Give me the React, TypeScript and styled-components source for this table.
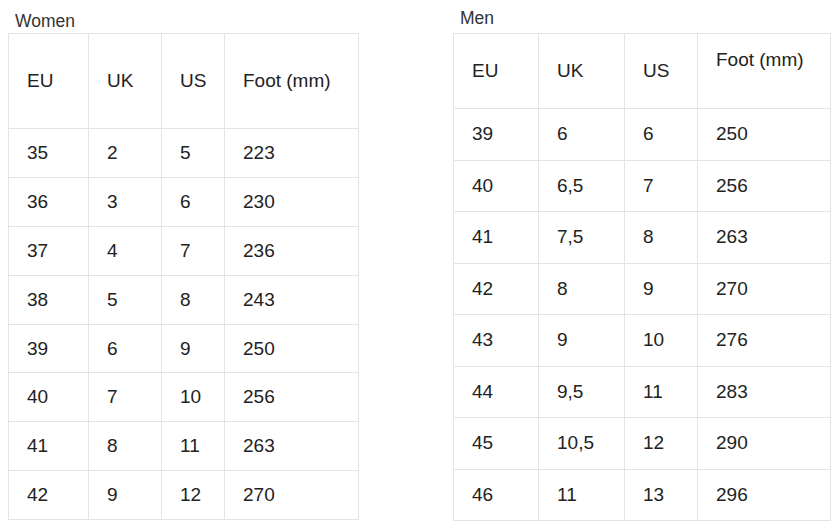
import styled, { createGlobalStyle } from 'styled-components';

const GlobalStyle = createGlobalStyle`
  body {
    margin: 0;
    background: #fff;
    font-family: 'Liberation Sans', Arial, sans-serif;
    color: #222;
  }
`;

const Page = styled.div`
  display: flex;
  align-items: flex-start;
  gap: 94px;
  padding-left: 8px;
  width: 839px;
  height: 529px;
  box-sizing: border-box;
`;

const Panel = styled.section`
  display: flex;
  flex-direction: column;
`;

const Title = styled.div<{ $top: number }>`
  font-size: 17.5px;
  line-height: 20px;
  color: #333;
  padding-left: 7px;
  padding-top: ${(p) => p.$top}px;
  height: 33px;
  box-sizing: border-box;
`;

const Table = styled.table`
  border-collapse: collapse;
  table-layout: fixed;
  font-size: 19px;
  color: #222;
`;

const HeadRow = styled.tr<{ $h: number }>`
  height: ${(p) => p.$h}px;
`;

const Row = styled.tr<{ $h: number }>`
  height: ${(p) => p.$h}px;
`;

const Cell = styled.td<{ $top?: boolean }>`
  border: 1px solid #e4e4e4;
  padding: ${(p) => (p.$top ? '15px 0 0 18px' : '0 0 0 18px')};
  vertical-align: ${(p) => (p.$top ? 'top' : 'middle')};
  text-align: left;
  font-weight: normal;
  white-space: nowrap;
`;

type SizeTable = {
  title: string;
  titleTop: number;
  cols: number[];
  headH: number;
  rowH: number;
  topFoot?: boolean;
  rows: string[][];
};

const women: SizeTable = {
  title: 'Women',
  titleTop: 11,
  cols: [80, 73, 63, 134],
  headH: 95,
  rowH: 48.9,
  rows: [
    ['35', '2', '5', '223'],
    ['36', '3', '6', '230'],
    ['37', '4', '7', '236'],
    ['38', '5', '8', '243'],
    ['39', '6', '9', '250'],
    ['40', '7', '10', '256'],
    ['41', '8', '11', '263'],
    ['42', '9', '12', '270'],
  ],
};

const men: SizeTable = {
  title: 'Men',
  titleTop: 8,
  cols: [85, 86, 73, 133],
  headH: 75,
  rowH: 51.5,
  topFoot: true,
  rows: [
    ['39', '6', '6', '250'],
    ['40', '6,5', '7', '256'],
    ['41', '7,5', '8', '263'],
    ['42', '8', '9', '270'],
    ['43', '9', '10', '276'],
    ['44', '9,5', '11', '283'],
    ['45', '10,5', '12', '290'],
    ['46', '11', '13', '296'],
  ],
};

const headers = ['EU', 'UK', 'US', 'Foot (mm)'];

function SizeChart({ data }: { data: SizeTable }) {
  const total = data.cols.reduce((a, b) => a + b, 0);
  return (
    <Panel>
      <Title $top={data.titleTop}>{data.title}</Title>
      <Table style={{ width: total }}>
        <colgroup>
          {data.cols.map((w, i) => (
            <col key={i} style={{ width: w }} />
          ))}
        </colgroup>
        <tbody>
          <HeadRow $h={data.headH}>
            {headers.map((h, i) => (
              <Cell as="th" key={h} $top={data.topFoot && i === 3}>
                {h}
              </Cell>
            ))}
          </HeadRow>
          {data.rows.map((r) => (
            <Row key={r[0]} $h={data.rowH}>
              {r.map((v, i) => (
                <Cell key={i}>{v}</Cell>
              ))}
            </Row>
          ))}
        </tbody>
      </Table>
    </Panel>
  );
}

export default function App() {
  return (
    <>
      <GlobalStyle />
      <Page>
        <SizeChart data={women} />
        <SizeChart data={men} />
      </Page>
    </>
  );
}
